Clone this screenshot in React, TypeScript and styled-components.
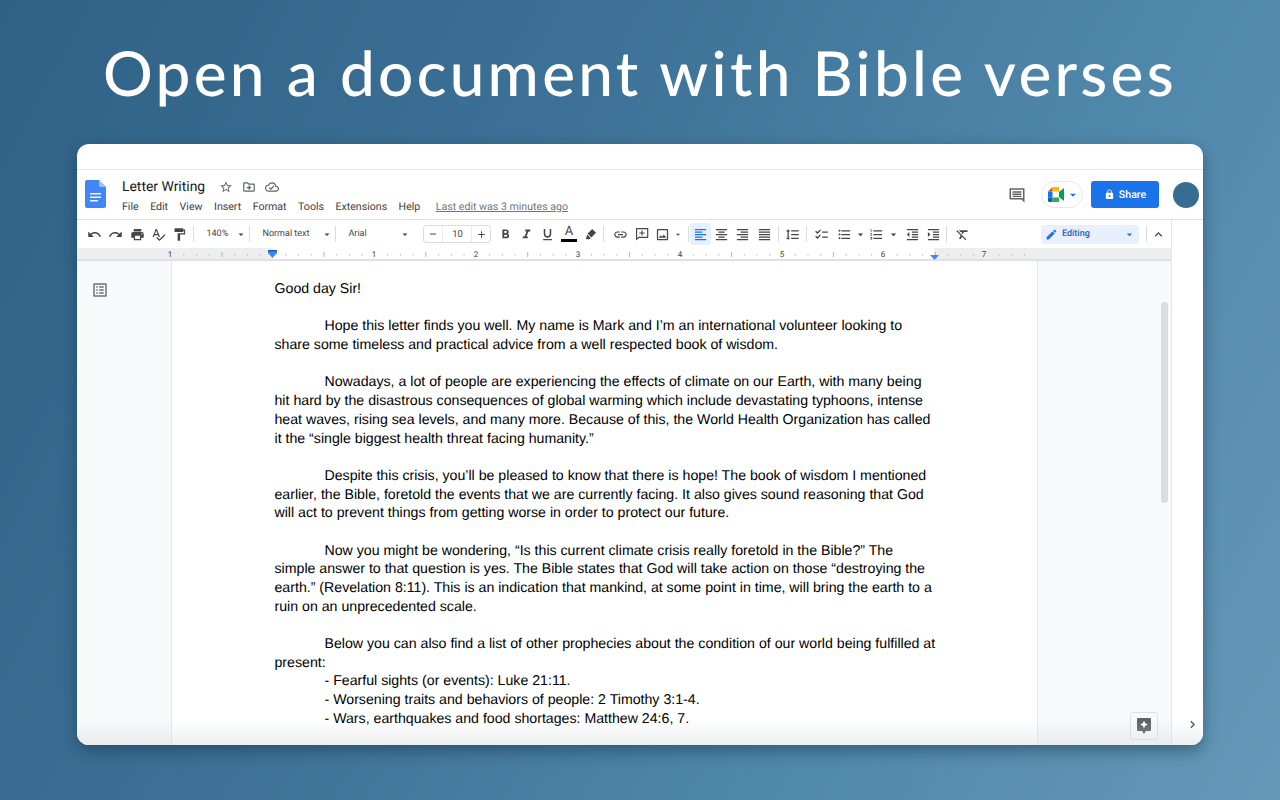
import { type ReactNode } from 'react'
import styled, { createGlobalStyle } from 'styled-components'
import {
  MdUndo,
  MdRedo,
  MdPrint,
  MdSpellcheck,
  MdFormatPaint,
  MdFormatBold,
  MdFormatItalic,
  MdFormatUnderlined,
  MdInsertLink,
  MdOutlineImage,
  MdFormatAlignLeft,
  MdFormatAlignCenter,
  MdFormatAlignRight,
  MdFormatAlignJustify,
  MdFormatLineSpacing,
  MdChecklist,
  MdFormatListBulleted,
  MdFormatListNumbered,
  MdFormatIndentDecrease,
  MdFormatIndentIncrease,
  MdFormatClear,
  MdEdit,
  MdExpandLess,
  MdLock,
  MdStarBorder,
  MdOutlineDriveFileMove,
  MdOutlineCloudDone,
  MdOutlineListAlt,
  MdArrowDropDown,
  MdChevronRight,
  MdAdd,
  MdRemove,
} from 'react-icons/md'

const GlobalStyle = createGlobalStyle`
  html, body {
    margin: 0;
    padding: 0;
  }
  body {
    width: 1280px;
    height: 800px;
    overflow: hidden;
    font-family: Roboto, "Liberation Sans", sans-serif;
    text-rendering: geometricPrecision;
  }
`

const Stage = styled.div`
  width: 1280px;
  height: 800px;
  box-sizing: border-box;
  padding: 0 77px;
  background: linear-gradient(118deg, #2f6186 0%, #3c7096 35%, #5088ab 70%, #6598b9 100%);
`

const Heading = styled.h1`
  margin: 0 -60px;
  height: 144px;
  padding-top: 33px;
  box-sizing: border-box;
  text-align: center;
  white-space: nowrap;
  color: #fff;
  font-family: Lato, sans-serif;
  font-weight: 500;
  font-size: 62px;
  line-height: 80px;
  letter-spacing: 3.3px;
`

const Window = styled.div`
  position: relative;
  height: 601px;
  background: #fff;
  border-radius: 12px;
  overflow: hidden;
  display: flex;
  flex-direction: column;
  box-shadow: 0 6px 16px rgba(15, 40, 60, 0.45);
`

const TopStrip = styled.div`
  flex: 0 0 25px;
  border-bottom: 1px solid #e4e6e9;
`

const Header = styled.header`
  flex: 0 0 49px;
  display: flex;
  align-items: flex-start;
  border-bottom: 1px solid #e1e3e6;
`

const DocLogo = styled.svg`
  width: 21px;
  height: 28px;
  margin: 10px 0 0 8px;
`

const TitleBlock = styled.div`
  margin: 8px 0 0 16px;
  display: flex;
  flex-direction: column;
`

const TitleRow = styled.div`
  display: flex;
  align-items: center;
  height: 17px;
  color: #5f6368;
`

const Title = styled.span`
  font-size: 13.9px;
  color: #17181a;
  margin-right: 14px;
`

const TitleIcon = styled.span`
  display: flex;
  width: 23px;
  font-size: 14px;
`

const Menu = styled.div`
  display: flex;
  align-items: center;
  height: 20px;
  margin-top: 1px;
  font-size: 10.6px;
  color: #3c4043;
  white-space: nowrap;
`

const MenuItem = styled.span`
  margin-right: 11.5px;
`

const LastEdit = styled.span`
  margin-left: 4px;
  color: #70757a;
  text-decoration: underline;
`

const HeaderRight = styled.div`
  margin-left: auto;
  display: flex;
  align-items: center;
  margin-top: 11px;
`

const CommentIcon = styled.svg`
  width: 18px;
  height: 18px;
  margin-right: 15px;
`

const MeetPill = styled.div`
  width: 42px;
  height: 27px;
  box-sizing: border-box;
  border: 1px solid #e4e6e9;
  border-radius: 14px;
  display: flex;
  align-items: center;
  padding-left: 6px;
  margin-right: 8px;
`

const ShareButton = styled.div`
  width: 68px;
  height: 27px;
  border-radius: 3px;
  background: #1a73e8;
  color: #fff;
  font-size: 10.6px;
  font-weight: 500;
  display: flex;
  align-items: center;
  justify-content: center;
  gap: 4px;
`

const Avatar = styled.div`
  width: 26px;
  height: 26px;
  border-radius: 50%;
  background: #376d90;
  margin: 0 4px 0 14px;
`

const Workspace = styled.div`
  flex: 1;
  min-height: 0;
  display: flex;
`

const MainColumn = styled.div`
  flex: 0 0 1094px;
  display: flex;
  flex-direction: column;
  min-width: 0;
`

const SidePanel = styled.aside`
  flex: 1;
  border-left: 1px solid #e4e6e9;
  background: #fff;
  display: flex;
  flex-direction: column;
  justify-content: flex-end;
  align-items: flex-end;
  padding: 0 3px 13px 0;
  color: #444;
  font-size: 15px;
`

const Toolbar = styled.div`
  flex: 0 0 28px;
  display: flex;
  align-items: center;
  padding: 0 2px 0 7px;
  box-sizing: border-box;
  color: #444746;
`

const Tool = styled.span<{ $w?: number; $active?: boolean; $size?: number }>`
  flex: 0 0 ${(p) => p.$w ?? 21.3}px;
  height: 22px;
  display: flex;
  align-items: center;
  justify-content: center;
  font-size: ${(p) => p.$size ?? 15}px;
  border-radius: 3px;
  color: ${(p) => (p.$active ? '#1a73e8' : 'inherit')};
  background: ${(p) => (p.$active ? '#e8f0fe' : 'transparent')};
`

const Caret = styled(MdArrowDropDown)<{ $w?: number }>`
  flex: 0 0 ${(p) => p.$w ?? 12}px;
  font-size: 13px;
  color: #444746;
`

const Divider = styled.span<{ $gap?: number; $after?: number }>`
  flex: 0 0 1px;
  height: 16px;
  background: #dadce0;
  margin: 0 ${(p) => p.$after ?? 0}px 0 ${(p) => p.$gap ?? 0}px;
`

const Picker = styled.span<{ $w: number }>`
  flex: 0 0 ${(p) => p.$w}px;
  display: flex;
  align-items: center;
  justify-content: space-between;
  box-sizing: border-box;
  padding: 0 2px 0 12px;
  font-size: 9px;
  color: #444746;
  white-space: nowrap;
`

const SizeBox = styled.span`
  flex: 0 0 68px;
  height: 18px;
  box-sizing: border-box;
  margin-left: 10px;
  margin-right: 3px;
  border: 1px solid #dadce0;
  border-radius: 3px;
  display: grid;
  grid-template-columns: 18px 1fr 18px;
  align-items: center;
  justify-items: center;
  font-size: 9.5px;
  color: #444746;
`

const SizeValue = styled.span`
  align-self: stretch;
  justify-self: stretch;
  display: flex;
  align-items: center;
  justify-content: center;
  border-left: 1px solid #e8eaed;
  border-right: 1px solid #e8eaed;
`

const ColorA = styled.span`
  flex: 0 0 21.3px;
  height: 20px;
  display: flex;
  flex-direction: column;
  align-items: center;
  font-size: 13px;
  line-height: 15px;
`

const ColorBar = styled.span`
  width: 16px;
  height: 3px;
  background: #000;
`

const EditingPill = styled.span`
  margin-left: auto;
  flex: 0 0 98px;
  height: 19px;
  box-sizing: border-box;
  background: #e8f0fe;
  border-radius: 4px;
  color: #1a73e8;
  display: flex;
  align-items: center;
  padding: 0 3px 0 4px;
  font-size: 9px;
  font-weight: 500;
  gap: 4px;
`

const EditingLabel = styled.span`
  flex: 1;
  color: #1a5fc8;
`

const RulerBar = styled.svg`
  flex: 0 0 13px;
  display: block;
  width: 1094px;
  height: 13px;
`

const Canvas = styled.div`
  flex: 1;
  min-height: 0;
  display: flex;
`

const LeftMargin = styled.div`
  flex: 0 0 95px;
  background: #f8f9fa;
  border-right: 1px solid #e4e6e9;
  padding: 20px 0 0 14px;
  box-sizing: border-box;
  color: #6f7276;
  font-size: 18px;
`

const Page = styled.main`
  flex: 0 0 866px;
  box-sizing: border-box;
  background: #fff;
  padding: 19px 0 0 102.5px;
  border-right: 1px solid #e4e6e9;
  overflow: hidden;
  font-family: "Liberation Sans", Arial, sans-serif;
  font-size: 14.16px;
  line-height: 18.7px;
  color: #000;
  white-space: nowrap;
`

const Line = styled.div<{ $indent?: number }>`
  padding-left: ${(p) => p.$indent ?? 0}px;
  height: 18.7px;
`

const RightMargin = styled.div`
  position: relative;
  flex: 1;
  background: #f8f9fa;
`

const Scrollbar = styled.div`
  position: absolute;
  top: 41px;
  right: 3px;
  width: 7px;
  height: 201px;
  border-radius: 4px;
  background: #dadce0;
`

const ExploreButton = styled.div`
  position: absolute;
  right: 13px;
  bottom: 5px;
  width: 28px;
  height: 28px;
  box-sizing: border-box;
  border: 1px solid #dfe1e5;
  border-radius: 3px;
  background: #f8f9fa;
  display: flex;
  align-items: center;
  justify-content: center;
`

const BottomFade = styled.div`
  position: absolute;
  left: 0;
  right: 0;
  bottom: 0;
  height: 25px;
  pointer-events: none;
  background: linear-gradient(to bottom, rgba(225, 228, 232, 0), rgba(205, 210, 215, 0.35));
`

const letter: { indent?: number; text: string }[] = [
  { text: 'Good day Sir!' },
  { text: '' },
  { indent: 50, text: 'Hope this letter finds you well. My name is Mark and I’m an international volunteer looking to' },
  { text: 'share some timeless and practical advice from a well respected book of wisdom.' },
  { text: '' },
  { indent: 50, text: 'Nowadays, a lot of people are experiencing the effects of climate on our Earth, with many being' },
  { text: 'hit hard by the disastrous consequences of global warming which include devastating typhoons, intense' },
  { text: 'heat waves, rising sea levels, and many more. Because of this, the World Health Organization has called' },
  { text: 'it the “single biggest health threat facing humanity.”' },
  { text: '' },
  { indent: 50, text: 'Despite this crisis, you’ll be pleased to know that there is hope! The book of wisdom I mentioned' },
  { text: 'earlier, the Bible, foretold the events that we are currently facing. It also gives sound reasoning that God' },
  { text: 'will act to prevent things from getting worse in order to protect our future.' },
  { text: '' },
  { indent: 50, text: 'Now you might be wondering, “Is this current climate crisis really foretold in the Bible?” The' },
  { text: 'simple answer to that question is yes. The Bible states that God will take action on those “destroying the' },
  { text: 'earth.” (Revelation 8:11). This is an indication that mankind, at some point in time, will bring the earth to a' },
  { text: 'ruin on an unprecedented scale.' },
  { text: '' },
  { indent: 50, text: 'Below you can also find a list of other prophecies about the condition of our world being fulfilled at' },
  { text: 'present:' },
  { indent: 50, text: '- Fearful sights (or events): Luke 21:11.' },
  { indent: 50, text: '- Worsening traits and behaviors of people: 2 Timothy 3:1-4.' },
  { indent: 50, text: '- Wars, earthquakes and food shortages: Matthew 24:6, 7.' },
]

const menuItems = ['File', 'Edit', 'View', 'Insert', 'Format', 'Tools', 'Extensions', 'Help']

function Ruler() {
  const ticks: ReactNode[] = []
  const inch = 101.9
  const zero = 195.5
  for (let i = -8; i < 60; i++) {
    const x = zero + (i * inch) / 8
    if (x < 95 || x > 960) continue
    if (i % 8 === 0) continue
    ticks.push(
      i % 4 === 0 ? (
        <rect key={i} x={x} y={4} width={1} height={5} fill="#b0b4b8" />
      ) : (
        <rect key={i} x={x} y={6} width={1} height={1.4} fill="#b0b4b8" />
      ),
    )
  }
  return (
    <RulerBar viewBox="0 0 1094 13">
      <rect width="1094" height="13" fill="#eceef0" />
      <rect x="196" width="661" height="11" fill="#fff" />
      <rect y="11" width="1094" height="2" fill="#dfe1e4" />
      {ticks}
      {[
        ['1', 93],
        ['1', 297],
        ['2', 399],
        ['3', 501],
        ['4', 603],
        ['5', 705],
        ['6', 806],
        ['7', 907],
      ].map(([n, x], i) => (
        <text key={i} x={x} y={9} fontSize="8" fontFamily="Roboto, sans-serif" fill="#3c4043" textAnchor="middle">
          {n}
        </text>
      ))}
      <path d="M191 2h9v3l-4.5 5-4.5-5z" fill="#4285f4" />
      <rect x="191" y="2" width="9" height="1.5" fill="#1a56c4" />
      <path d="M853 7h9l-4.5 5z" fill="#4285f4" />
    </RulerBar>
  )
}

export default function App() {
  return (
    <Stage>
      <GlobalStyle />
      <Heading>Open a document with Bible verses</Heading>
      <Window>
        <TopStrip />
        <Header>
          <DocLogo viewBox="0 0 21 28">
            <path d="M2 0h12l7 7v19a2 2 0 0 1-2 2H2a2 2 0 0 1-2-2V2a2 2 0 0 1 2-2z" fill="#4285f4" />
            <path d="M14 0l7 7h-5a2 2 0 0 1-2-2z" fill="#a1c2fa" />
            <path d="M5 13h11v1.6H5zM5 16.5h11v1.6H5zM5 20h8v1.6H5z" fill="#f1f5fe" />
          </DocLogo>
          <TitleBlock>
            <TitleRow>
              <Title>Letter Writing</Title>
              <TitleIcon>
                <MdStarBorder />
              </TitleIcon>
              <TitleIcon>
                <MdOutlineDriveFileMove />
              </TitleIcon>
              <TitleIcon>
                <MdOutlineCloudDone />
              </TitleIcon>
            </TitleRow>
            <Menu>
              {menuItems.map((item) => (
                <MenuItem key={item}>{item}</MenuItem>
              ))}
              <LastEdit>Last edit was 3 minutes ago</LastEdit>
            </Menu>
          </TitleBlock>
          <HeaderRight>
            <CommentIcon viewBox="0 0 24 24">
              <path
                d="M3 3h18a1 1 0 0 1 1 1v18l-4-4H3a1 1 0 0 1-1-1V4a1 1 0 0 1 1-1zm1 2v11h15l1 1V5zm2 2h12v2H6zm0 3h12v2H6zm0 3h12v1.6H6z"
                fill="#5f6368"
                fillRule="evenodd"
              />
            </CommentIcon>
            <MeetPill>
              <svg width="18" height="15" viewBox="0 0 18 15">
                <path d="M0 4.5L4.5 0v4.5z" fill="#ea4335" />
                <path d="M4.5 0H11v4.5H4.5z" fill="#fbbc04" />
                <path d="M0 4.5h4.5v6H0z" fill="#1a73e8" />
                <path d="M0 10.5h4.5V15H1.5A1.5 1.5 0 0 1 0 13.5z" fill="#0d5bc4" />
                <path d="M4.5 10.5H11V15H4.5z" fill="#34a853" />
                <path d="M11 5l5-4v13l-5-4z" fill="#00a14b" />
                <path d="M11 0v5l-1 0V0z" fill="#f5b400" />
              </svg>
              <MdArrowDropDown size={14} color="#1a73e8" />
            </MeetPill>
            <ShareButton>
              <MdLock size={11} />
              Share
            </ShareButton>
            <Avatar />
          </HeaderRight>
        </Header>
        <Workspace>
          <MainColumn>
            <Toolbar>
              <Tool><MdUndo /></Tool>
              <Tool><MdRedo /></Tool>
              <Tool><MdPrint /></Tool>
              <Tool><MdSpellcheck /></Tool>
              <Tool><MdFormatPaint /></Tool>
              <Divider $gap={3} />
              <Picker $w={55}>
                140%
                <Caret />
              </Picker>
              <Divider />
              <Picker $w={85}>
                Normal text
                <Caret />
              </Picker>
              <Divider />
              <Picker $w={77}>
                Arial
                <Caret />
              </Picker>
              <SizeBox>
                <MdRemove size={10} />
                <SizeValue>10</SizeValue>
                <MdAdd size={11} />
              </SizeBox>
              <Tool><MdFormatBold /></Tool>
              <Tool><MdFormatItalic /></Tool>
              <Tool><MdFormatUnderlined /></Tool>
              <ColorA>
                A
                <ColorBar />
              </ColorA>
              <Tool $size={13}>
                <svg width="13" height="13" viewBox="0 0 13 13">
                  <path d="M8.2 1l3.8 3.8-4.6 4.6-3.8-3.8zM3 6.3l3.7 3.7-1.3 1.3H2.6l-1-1 1.1-1.2z" fill="#444746" />
                </svg>
              </Tool>
              <Divider $gap={2} $after={6} />
              <Tool><MdInsertLink /></Tool>
              <Tool>
                <svg width="14" height="14" viewBox="0 0 14 14">
                  <path
                    d="M1.5 1h11a.8.8 0 0 1 .8.8v8.4a.8.8 0 0 1-.8.8H4l-3 2.6V1.800a.8.8 0 0 1 .5-.8zm.6 1.200v8.900L3.600 9.800h8.500V2.200zM6.400 3.400h1.200v2h2v1.200h-2v2H6.400v-2h-2V5.400h2z"
                    fill="#444746"
                    fillRule="evenodd"
                  />
                </svg>
              </Tool>
              <Tool $w={20}><MdOutlineImage /></Tool>
              <Caret $w={10} />
              <Divider $gap={5} $after={1} />
              <Tool $active><MdFormatAlignLeft /></Tool>
              <Tool><MdFormatAlignCenter /></Tool>
              <Tool><MdFormatAlignRight /></Tool>
              <Tool><MdFormatAlignJustify /></Tool>
              <Divider $gap={3} />
              <Tool $w={27}><MdFormatLineSpacing /></Tool>
              <Divider />
              <Tool $w={30}><MdChecklist /></Tool>
              <Tool $w={14}><MdFormatListBulleted /></Tool>
              <Caret $w={17} />
              <Tool $w={16}><MdFormatListNumbered /></Tool>
              <Caret $w={17} />
              <Tool><MdFormatIndentDecrease /></Tool>
              <Tool><MdFormatIndentIncrease /></Tool>
              <Divider $gap={2} />
              <Tool $w={30}><MdFormatClear /></Tool>
              <EditingPill>
                <MdEdit size={13} />
                <EditingLabel>Editing</EditingLabel>
                <MdArrowDropDown size={13} />
              </EditingPill>
              <Divider $gap={7} />
              <Tool $w={22}><MdExpandLess /></Tool>
            </Toolbar>
            <Ruler />
            <Canvas>
              <LeftMargin>
                <MdOutlineListAlt />
              </LeftMargin>
              <Page>
                {letter.map((line, i) => (
                  <Line key={i} $indent={line.indent}>
                    {line.text}
                  </Line>
                ))}
              </Page>
              <RightMargin>
                <Scrollbar />
                <ExploreButton>
                  <svg width="16" height="18" viewBox="0 0 16 18">
                    <path d="M2 1h12a1 1 0 0 1 1 1v11a1 1 0 0 1-1 1h-4l-2 3-2-3H2a1 1 0 0 1-1-1V2a1 1 0 0 1 1-1z" fill="#5f6368" />
                    <path d="M8 3.5l1.2 2.8L12 7.5 9.2 8.7 8 11.5 6.8 8.7 4 7.5l2.8-1.2z" fill="#fff" />
                  </svg>
                </ExploreButton>
              </RightMargin>
            </Canvas>
          </MainColumn>
          <SidePanel>
            <MdChevronRight />
          </SidePanel>
        </Workspace>
        <BottomFade />
      </Window>
    </Stage>
  )
}
